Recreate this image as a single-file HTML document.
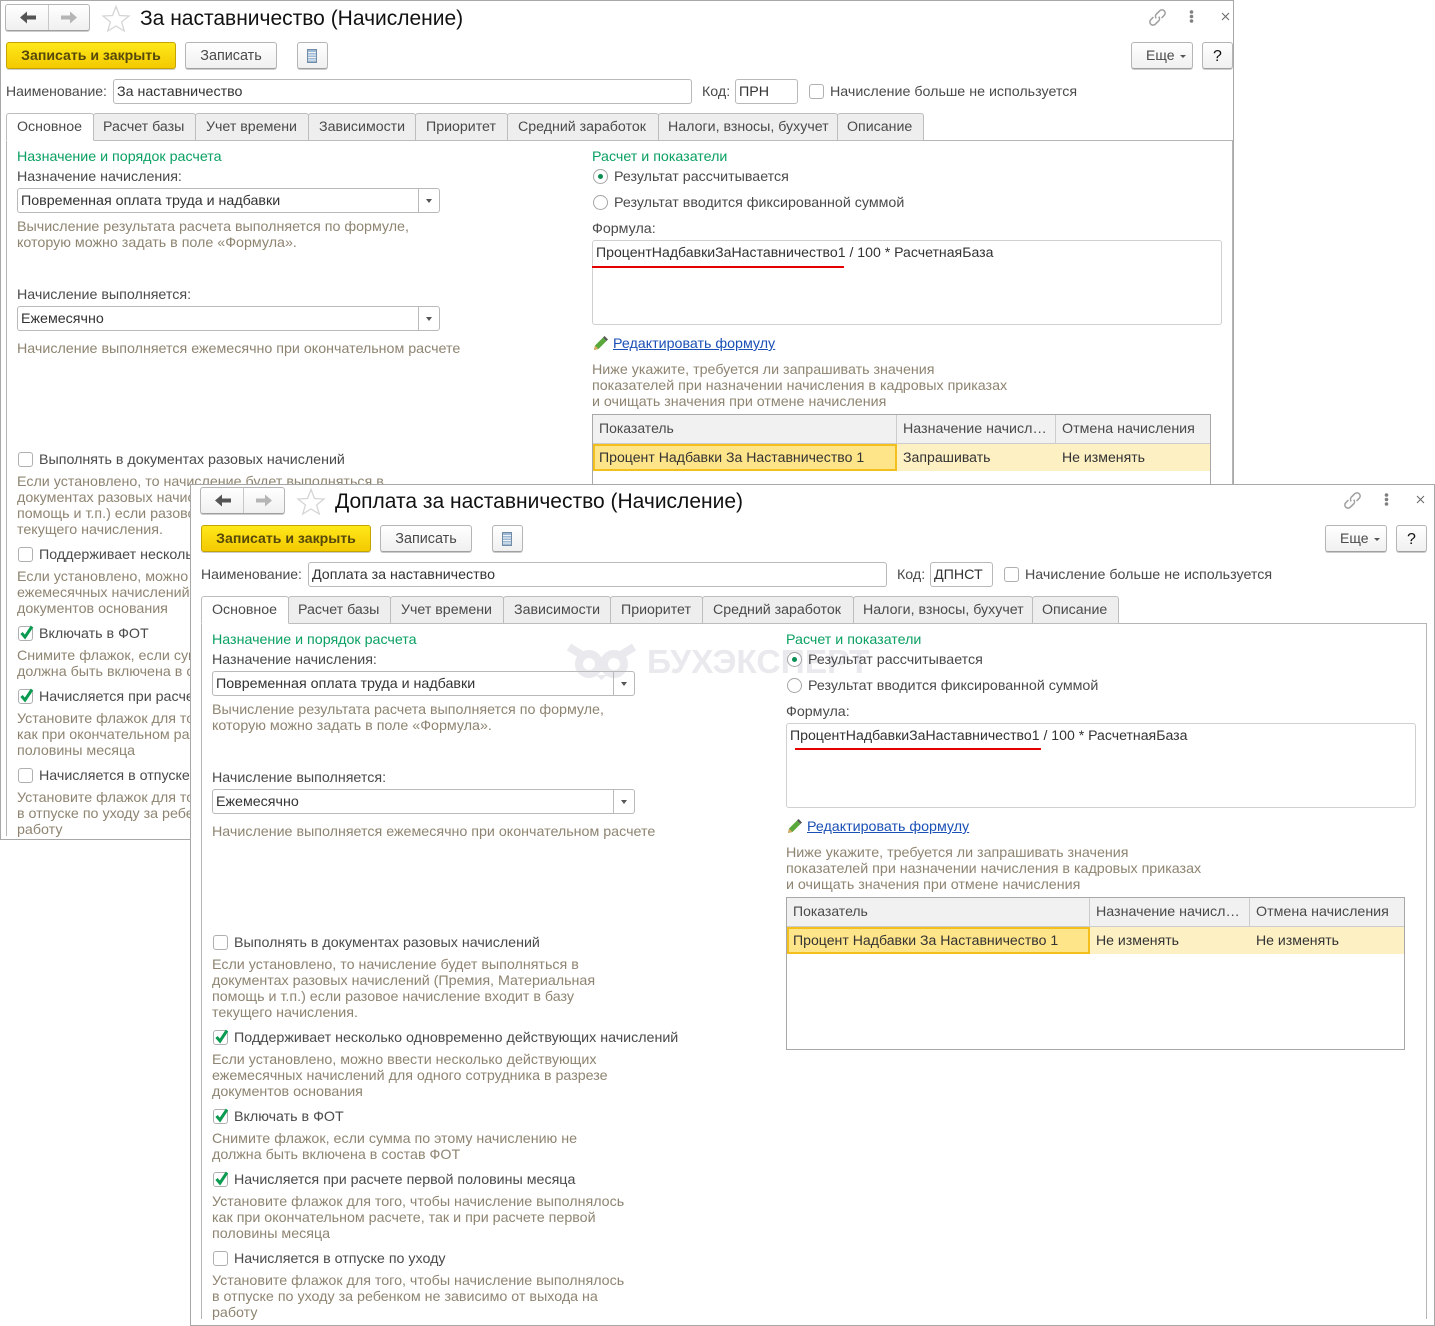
<!DOCTYPE html>
<html lang="ru"><head><meta charset="utf-8"><title>Начисление</title>
<style>
html,body{margin:0;padding:0;background:#fff}
body{position:relative;width:1435px;height:1326px;overflow:hidden;font:14.25px/16px "Liberation Sans",Arial,sans-serif;color:#4a4a4a}
.win{position:absolute;box-sizing:border-box;background:#fff;border:1px solid #a8a8a8;overflow:hidden}
#w1{left:0;top:0;width:1234px;height:840px}
#w2{left:190px;top:484px;width:1245px;height:842px}
.c{position:absolute}
#w1 .c{left:-1px;top:-1px}
#w2 .c{left:4px;top:-2px}
.c>*{position:absolute;box-sizing:border-box}
.t{white-space:nowrap;height:18px;padding-top:1px}
.h{color:#8e8471;white-space:nowrap;height:18px;padding-top:1px;font-size:14.28px}
.g{color:#0aa062;white-space:nowrap;height:18px;padding-top:1px}
.d{color:#333;white-space:nowrap;height:16px;font-size:14.1px}
.b{border:1px solid #b5b5b5;border-bottom-color:#a0a0a0;border-radius:3px;background:linear-gradient(#fff,#f0f0f0);box-shadow:0 1px 0 #ccc;text-align:center;line-height:27px;height:27px;color:#4a4a4a;font-size:14.4px}
.y{background:linear-gradient(#ffe81a,#f3ca00);border-color:#c4a400;color:#55480a;font-weight:bold;font-size:14.1px;line-height:25px}
.m{text-align:left;padding-left:14px;font-size:14px;line-height:25px}
.q{color:#111;font-size:16px;line-height:28px}
.i{border:1px solid #b9b9b9;border-radius:3px;height:25px;line-height:25px;padding-left:3px;color:#333;white-space:nowrap;font-size:14.25px}
.sel:after{content:"";position:absolute;right:20px;top:0;height:23px;border-left:1px solid #b9b9b9}
.sel:before{content:"";position:absolute;right:7px;top:10px;border:3px solid transparent;border-top:4px solid #555;border-bottom:0}
.tab{top:113px;height:28px;background:#eee;border:1px solid #bdbdbd;border-radius:3px 3px 0 0;line-height:26px;padding-left:9px;color:#4a4a4a;white-space:nowrap;font-size:14.2px}
.tab.a{background:#fff;border-bottom-color:#fff;padding-left:10px;z-index:2}
.p{left:6px;top:140px;width:1227px;height:696px;border:1px solid #b5b5b5;border-bottom:0}
.cb{left:18px;width:15px;height:15px;border:1px solid #b0b0b0;border-radius:3px;background:#fff}
.cb svg{position:absolute;left:0;top:-3px}
.r{left:593px;width:15px;height:15px;border:1px solid #a5a5a5;border-radius:50%;background:#fff}
.r.on:after{content:"";position:absolute;left:4px;top:4px;width:5px;height:5px;border-radius:50%;background:#0a8f54}
.fb{left:592px;top:240px;width:630px;height:85px;border:1px solid #d0d0d0;border-radius:3px}
.th{background:#f1f1f1}
.tt{font-size:21px;line-height:24px;height:24px;color:#111;white-space:nowrap}
a{color:#1a4fb5;text-decoration:underline;font-size:14.25px}
.z{padding-top:0;font-size:14px}
svg{display:block;overflow:visible}
</style></head><body>

<div class="win" id="w1"><div class="c">
<div class="b" style="left:5px;top:4px;width:85px"></div>
<div style="left:48px;top:5px;width:1px;height:25px;background:#c8c8c8"></div>
<svg style="left:19px;top:11px" width="18" height="13"><path d="M1 6.5L8 .5V4.5H17V8.5H8V12.5Z" fill="#555"/></svg>
<svg style="left:60px;top:11px" width="18" height="13"><path d="M17 6.5L10 .5V4.5H1V8.5H10V12.5Z" fill="#b5b5b5"/></svg>
<svg style="left:102px;top:5px" width="28" height="27"><path d="M14 1.5L17.5 10.5L27 11L19.6 17L22.2 26L14 21L5.8 26L8.4 17L1 11L10.5 10.5Z" fill="#fff" stroke="#d5d5d5" stroke-width="1.3"/></svg>
<div class="tt" style="left:140px;top:7px">За наставничество (Начисление)</div>
<div class="b y" style="left:6px;top:42px;width:170px">Записать и закрыть</div>
<div class="b" style="left:185px;top:42px;width:92px">Записать</div>
<div class="b" style="left:297px;top:42px;width:31px"></div>
<svg style="left:307px;top:49px" width="11" height="15"><rect x=".5" y=".5" width="9" height="13" fill="#9db8d2" stroke="#6f8ba6"/><path d="M1 3.5H9M1 6H9M1 8.5H9M1 11H9" stroke="#eef3f8"/></svg>
<svg style="left:1148px;top:8px" width="19" height="19" fill="none" stroke="#a0a0a0" stroke-width="1.5"><g transform="rotate(-45 9.5 9.5)"><path d="M7 6.3H3.2a3.2 3.2 0 0 0 0 6.4H8a3.2 3.2 0 0 0 3-3"/><path d="M12 12.7H15.8a3.2 3.2 0 0 0 0-6.4H11a3.2 3.2 0 0 0-3 3"/></g></svg>
<svg style="left:1189px;top:10px" width="5" height="14" fill="#808080"><circle cx="2.5" cy="2" r="1.8"/><circle cx="2.5" cy="6.5" r="1.8"/><circle cx="2.5" cy="11" r="1.8"/></svg>
<svg style="left:1221px;top:12px" width="9" height="9" stroke="#666" stroke-width="1"><path d="M1 1L8 8M8 1L1 8"/></svg>
<div class="b m" style="left:1131px;top:42px;width:62px">Еще</div>
<div style="left:1180px;top:55px;border:3px solid transparent;border-top:3px solid #555;border-bottom:0"></div>
<div class="b q" style="left:1202px;top:42px;width:31px">?</div>

<div class="t z" style="left:6px;top:83px">Наименование:</div>
<div class="i" style="left:113px;top:79px;width:579px">За наставничество</div>
<div class="t" style="left:702px;top:83px">Код:</div>
<div class="i" style="left:735px;top:79px;width:63px">ПРН</div>
<div class="cb" style="left:809px;top:84px"></div>
<div class="t" style="left:830px;top:83px">Начисление больше не используется</div>

<div class="p"></div>
<div class="tab a" style="left:6px;width:88px">Основное</div>
<div class="tab" style="left:93px;width:103px">Расчет базы</div>
<div class="tab" style="left:195px;width:114px;padding-left:10px">Учет времени</div>
<div class="tab" style="left:308px;width:108px;padding-left:10px">Зависимости</div>
<div class="tab" style="left:415px;width:93px;padding-left:10px">Приоритет</div>
<div class="tab" style="left:507px;width:152px;padding-left:10px">Средний заработок</div>
<div class="tab" style="left:658px;width:180px">Налоги, взносы, бухучет</div>
<div class="tab" style="left:837px;width:87px">Описание</div>

<div class="g" style="left:17px;top:148px">Назначение и порядок расчета</div>
<div class="t" style="left:17px;top:168px">Назначение начисления:</div>
<div class="i sel" style="left:17px;top:188px;width:423px">Повременная оплата труда и надбавки</div>
<div class="h" style="left:17px;top:218px">Вычисление результата расчета выполняется по формуле,</div>
<div class="h" style="left:17px;top:234px">которую можно задать в поле «Формула».</div>
<div class="t" style="left:17px;top:286px">Начисление выполняется:</div>
<div class="i sel" style="left:17px;top:306px;width:423px">Ежемесячно</div>
<div class="h" style="left:17px;top:340px">Начисление выполняется ежемесячно при окончательном расчете</div>

<div class="cb" style="top:452px"></div>
<div class="t" style="left:39px;top:451px">Выполнять в документах разовых начислений</div>
<div class="h" style="left:17px;top:473px">Если установлено, то начисление будет выполняться в</div>
<div class="h" style="left:17px;top:489px">документах разовых начислений (Премия, Материальная</div>
<div class="h" style="left:17px;top:505px">помощь и т.п.) если разовое начисление входит в базу</div>
<div class="h" style="left:17px;top:521px">текущего начисления.</div>
<div class="cb" style="top:547px"></div>
<div class="t" style="left:39px;top:546px">Поддерживает несколько одновременно действующих начислений</div>
<div class="h" style="left:17px;top:568px">Если установлено, можно ввести несколько действующих</div>
<div class="h" style="left:17px;top:584px">ежемесячных начислений для одного сотрудника в разрезе</div>
<div class="h" style="left:17px;top:600px">документов основания</div>
<div class="cb" style="top:626px"><svg width="15" height="16" fill="none" stroke="#0a9a50" stroke-width="3"><path d="M2.5 9L6 13L13 2.5"/></svg></div>
<div class="t" style="left:39px;top:625px">Включать в ФОТ</div>
<div class="h" style="left:17px;top:647px">Снимите флажок, если сумма по этому начислению не</div>
<div class="h" style="left:17px;top:663px">должна быть включена в состав ФОТ</div>
<div class="cb" style="top:689px"><svg width="15" height="16" fill="none" stroke="#0a9a50" stroke-width="3"><path d="M2.5 9L6 13L13 2.5"/></svg></div>
<div class="t" style="left:39px;top:688px">Начисляется при расчете первой половины месяца</div>
<div class="h" style="left:17px;top:710px">Установите флажок для того, чтобы начисление выполнялось</div>
<div class="h" style="left:17px;top:726px">как при окончательном расчете, так и при расчете первой</div>
<div class="h" style="left:17px;top:742px">половины месяца</div>
<div class="cb" style="top:768px"></div>
<div class="t" style="left:39px;top:767px">Начисляется в отпуске по уходу</div>
<div class="h" style="left:17px;top:789px">Установите флажок для того, чтобы начисление выполнялось</div>
<div class="h" style="left:17px;top:805px">в отпуске по уходу за ребенком не зависимо от выхода на</div>
<div class="h" style="left:17px;top:821px">работу</div>

<div class="g" style="left:592px;top:148px">Расчет и показатели</div>
<div class="r on" style="top:169px"></div>
<div class="t" style="left:614px;top:168px">Результат рассчитывается</div>
<div class="r" style="top:195px"></div>
<div class="t" style="left:614px;top:194px">Результат вводится фиксированной суммой</div>
<div class="t" style="left:592px;top:220px">Формула:</div>
<div class="fb"></div>
<div class="d" style="left:596px;top:244px">ПроцентНадбавкиЗаНаставничество1 / 100 * РасчетнаяБаза</div>
<div style="left:592px;top:266px;width:252px;height:2px;background:#e60000"></div>
<svg style="left:593px;top:336px" width="15" height="15"><path d="M1 14L2 9.5L10 1.5L13.5 5L5.5 13Z" fill="#5aa83c"/><path d="M1 14L2 9.5L5.5 13Z" fill="#d8a860"/><path d="M10 1.5L11.5 0L15 3.5L13.5 5Z" fill="#555"/></svg>
<a class="t" style="left:613px;top:335px">Редактировать формулу</a>
<div class="h" style="left:592px;top:361px">Ниже укажите, требуется ли запрашивать значения</div>
<div class="h" style="left:592px;top:377px">показателей при назначении начисления в кадровых приказах</div>
<div class="h" style="left:592px;top:393px">и очищать значения при отмене начисления</div>
<div style="left:592px;top:414px;width:619px;height:154px;border:1px solid #a8a8a8"></div>
<div class="th" style="left:593px;top:415px;width:617px;height:29px;border-bottom:1px solid #ccc"></div>
<div style="left:896px;top:415px;width:1px;height:28px;background:#ccc"></div>
<div style="left:1055px;top:415px;width:1px;height:28px;background:#ccc"></div>
<div style="left:593px;top:444px;width:617px;height:27px;background:#fdf1c4"></div>
<div style="left:593px;top:444px;width:304px;height:27px;background:#ffe58a;border:2px solid #f2bf1c"></div>
<div class="t z" style="left:599px;top:420px">Показатель</div>
<div class="t" style="left:903px;top:420px;width:147px;overflow:hidden;text-overflow:ellipsis">Назначение начисления</div>
<div class="t" style="left:1062px;top:420px">Отмена начисления</div>
<div class="d" style="left:599px;top:449px">Процент Надбавки За Наставничество 1</div>
<div class="d" style="left:903px;top:449px">Запрашивать</div>
<div class="d" style="left:1062px;top:449px">Не изменять</div>
</div></div>

<div class="win" id="w2"><div class="c">
<svg style="left:373px;top:161px" width="68" height="38" fill="none" stroke="#e9e9ee" stroke-width="8"><circle cx="21" cy="20" r="10"/><circle cx="46" cy="20" r="10"/><path d="M1 3L14 11M66 3L53 11"/><path d="M28 31H39L33.5 36Z" fill="#e9e9ee" stroke="none"/></svg>
<div style="left:452px;top:160px;font:bold 33.5px/40px 'Liberation Sans',Arial,sans-serif;color:#e9e9ee;white-space:nowrap">БУХЭКСПЕРТ</div>

<div class="b" style="left:5px;top:4px;width:85px"></div>
<div style="left:48px;top:5px;width:1px;height:25px;background:#c8c8c8"></div>
<svg style="left:19px;top:11px" width="18" height="13"><path d="M1 6.5L8 .5V4.5H17V8.5H8V12.5Z" fill="#555"/></svg>
<svg style="left:60px;top:11px" width="18" height="13"><path d="M17 6.5L10 .5V4.5H1V8.5H10V12.5Z" fill="#b5b5b5"/></svg>
<svg style="left:102px;top:5px" width="28" height="27"><path d="M14 1.5L17.5 10.5L27 11L19.6 17L22.2 26L14 21L5.8 26L8.4 17L1 11L10.5 10.5Z" fill="#fff" stroke="#d5d5d5" stroke-width="1.3"/></svg>
<div class="tt" style="left:140px;top:7px">Доплата за наставничество (Начисление)</div>
<div class="b y" style="left:6px;top:42px;width:170px">Записать и закрыть</div>
<div class="b" style="left:185px;top:42px;width:92px">Записать</div>
<div class="b" style="left:297px;top:42px;width:31px"></div>
<svg style="left:307px;top:49px" width="11" height="15"><rect x=".5" y=".5" width="9" height="13" fill="#9db8d2" stroke="#6f8ba6"/><path d="M1 3.5H9M1 6H9M1 8.5H9M1 11H9" stroke="#eef3f8"/></svg>
<svg style="left:1148px;top:8px" width="19" height="19" fill="none" stroke="#a0a0a0" stroke-width="1.5"><g transform="rotate(-45 9.5 9.5)"><path d="M7 6.3H3.2a3.2 3.2 0 0 0 0 6.4H8a3.2 3.2 0 0 0 3-3"/><path d="M12 12.7H15.8a3.2 3.2 0 0 0 0-6.4H11a3.2 3.2 0 0 0-3 3"/></g></svg>
<svg style="left:1189px;top:10px" width="5" height="14" fill="#808080"><circle cx="2.5" cy="2" r="1.8"/><circle cx="2.5" cy="6.5" r="1.8"/><circle cx="2.5" cy="11" r="1.8"/></svg>
<svg style="left:1221px;top:12px" width="9" height="9" stroke="#666" stroke-width="1"><path d="M1 1L8 8M8 1L1 8"/></svg>
<div class="b m" style="left:1130px;top:42px;width:62px">Еще</div>
<div style="left:1179px;top:55px;border:3px solid transparent;border-top:3px solid #555;border-bottom:0"></div>
<div class="b q" style="left:1201px;top:42px;width:31px">?</div>

<div class="t z" style="left:6px;top:83px">Наименование:</div>
<div class="i" style="left:113px;top:79px;width:579px">Доплата за наставничество</div>
<div class="t" style="left:702px;top:83px">Код:</div>
<div class="i" style="left:735px;top:79px;width:63px">ДПНСТ</div>
<div class="cb" style="left:809px;top:84px"></div>
<div class="t" style="left:830px;top:83px">Начисление больше не используется</div>

<div class="p" style="width:1226px"></div>
<div class="tab a" style="left:6px;width:88px">Основное</div>
<div class="tab" style="left:93px;width:103px">Расчет базы</div>
<div class="tab" style="left:195px;width:114px;padding-left:10px">Учет времени</div>
<div class="tab" style="left:308px;width:108px;padding-left:10px">Зависимости</div>
<div class="tab" style="left:415px;width:93px;padding-left:10px">Приоритет</div>
<div class="tab" style="left:507px;width:152px;padding-left:10px">Средний заработок</div>
<div class="tab" style="left:658px;width:180px">Налоги, взносы, бухучет</div>
<div class="tab" style="left:837px;width:87px">Описание</div>

<div class="g" style="left:17px;top:148px">Назначение и порядок расчета</div>
<div class="t" style="left:17px;top:168px">Назначение начисления:</div>
<div class="i sel" style="left:17px;top:188px;width:423px">Повременная оплата труда и надбавки</div>
<div class="h" style="left:17px;top:218px">Вычисление результата расчета выполняется по формуле,</div>
<div class="h" style="left:17px;top:234px">которую можно задать в поле «Формула».</div>
<div class="t" style="left:17px;top:286px">Начисление выполняется:</div>
<div class="i sel" style="left:17px;top:306px;width:423px">Ежемесячно</div>
<div class="h" style="left:17px;top:340px">Начисление выполняется ежемесячно при окончательном расчете</div>

<div class="cb" style="top:452px"></div>
<div class="t" style="left:39px;top:451px">Выполнять в документах разовых начислений</div>
<div class="h" style="left:17px;top:473px">Если установлено, то начисление будет выполняться в</div>
<div class="h" style="left:17px;top:489px">документах разовых начислений (Премия, Материальная</div>
<div class="h" style="left:17px;top:505px">помощь и т.п.) если разовое начисление входит в базу</div>
<div class="h" style="left:17px;top:521px">текущего начисления.</div>
<div class="cb" style="top:547px"><svg width="15" height="16" fill="none" stroke="#0a9a50" stroke-width="3"><path d="M2.5 9L6 13L13 2.5"/></svg></div>
<div class="t" style="left:39px;top:546px">Поддерживает несколько одновременно действующих начислений</div>
<div class="h" style="left:17px;top:568px">Если установлено, можно ввести несколько действующих</div>
<div class="h" style="left:17px;top:584px">ежемесячных начислений для одного сотрудника в разрезе</div>
<div class="h" style="left:17px;top:600px">документов основания</div>
<div class="cb" style="top:626px"><svg width="15" height="16" fill="none" stroke="#0a9a50" stroke-width="3"><path d="M2.5 9L6 13L13 2.5"/></svg></div>
<div class="t" style="left:39px;top:625px">Включать в ФОТ</div>
<div class="h" style="left:17px;top:647px">Снимите флажок, если сумма по этому начислению не</div>
<div class="h" style="left:17px;top:663px">должна быть включена в состав ФОТ</div>
<div class="cb" style="top:689px"><svg width="15" height="16" fill="none" stroke="#0a9a50" stroke-width="3"><path d="M2.5 9L6 13L13 2.5"/></svg></div>
<div class="t" style="left:39px;top:688px">Начисляется при расчете первой половины месяца</div>
<div class="h" style="left:17px;top:710px">Установите флажок для того, чтобы начисление выполнялось</div>
<div class="h" style="left:17px;top:726px">как при окончательном расчете, так и при расчете первой</div>
<div class="h" style="left:17px;top:742px">половины месяца</div>
<div class="cb" style="top:768px"></div>
<div class="t" style="left:39px;top:767px">Начисляется в отпуске по уходу</div>
<div class="h" style="left:17px;top:789px">Установите флажок для того, чтобы начисление выполнялось</div>
<div class="h" style="left:17px;top:805px">в отпуске по уходу за ребенком не зависимо от выхода на</div>
<div class="h" style="left:17px;top:821px">работу</div>

<div class="g" style="left:591px;top:148px">Расчет и показатели</div>
<div class="r on" style="left:592px;top:169px"></div>
<div class="t" style="left:613px;top:168px">Результат рассчитывается</div>
<div class="r" style="left:592px;top:195px"></div>
<div class="t" style="left:613px;top:194px">Результат вводится фиксированной суммой</div>
<div class="t" style="left:591px;top:220px">Формула:</div>
<div class="fb" style="left:591px"></div>
<div class="d" style="left:595px;top:244px">ПроцентНадбавкиЗаНаставничество1 / 100 * РасчетнаяБаза</div>
<div style="left:600px;top:265px;width:246px;height:2px;background:#e60000"></div>
<svg style="left:592px;top:336px" width="15" height="15"><path d="M1 14L2 9.5L10 1.5L13.5 5L5.5 13Z" fill="#5aa83c"/><path d="M1 14L2 9.5L5.5 13Z" fill="#d8a860"/><path d="M10 1.5L11.5 0L15 3.5L13.5 5Z" fill="#555"/></svg>
<a class="t" style="left:612px;top:335px">Редактировать формулу</a>
<div class="h" style="left:591px;top:361px">Ниже укажите, требуется ли запрашивать значения</div>
<div class="h" style="left:591px;top:377px">показателей при назначении начисления в кадровых приказах</div>
<div class="h" style="left:591px;top:393px">и очищать значения при отмене начисления</div>
<div style="left:591px;top:414px;width:619px;height:153px;border:1px solid #a8a8a8"></div>
<div class="th" style="left:592px;top:415px;width:617px;height:29px;border-bottom:1px solid #ccc"></div>
<div style="left:894px;top:415px;width:1px;height:28px;background:#ccc"></div>
<div style="left:1054px;top:415px;width:1px;height:28px;background:#ccc"></div>
<div style="left:592px;top:444px;width:617px;height:27px;background:#fdf1c4"></div>
<div style="left:592px;top:444px;width:303px;height:27px;background:#ffe58a;border:2px solid #f2bf1c"></div>
<div class="t z" style="left:598px;top:420px">Показатель</div>
<div class="t" style="left:901px;top:420px;width:147px;overflow:hidden;text-overflow:ellipsis">Назначение начисления</div>
<div class="t" style="left:1061px;top:420px">Отмена начисления</div>
<div class="d" style="left:598px;top:449px">Процент Надбавки За Наставничество 1</div>
<div class="d" style="left:901px;top:449px">Не изменять</div>
<div class="d" style="left:1061px;top:449px">Не изменять</div>
</div></div>
</body></html>
